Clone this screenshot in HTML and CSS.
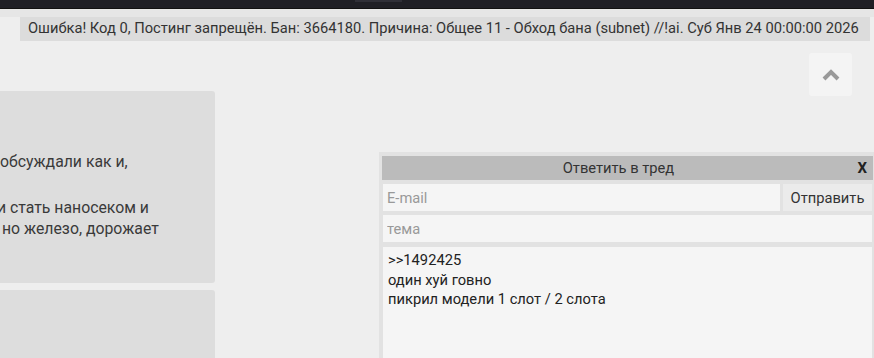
FILE: index.html
```html
<!DOCTYPE html>
<html lang="ru">
<head>
  <meta charset="UTF-8">
  <meta name="viewport" content="width=device-width, initial-scale=1.0">
  <title>Тред</title>
  <link rel="stylesheet" href="styles.css">
</head>
<body>
  <div class="topbar">
    <div class="topbar-tab"></div>
  </div>
  <div class="subbar"></div>

  <div class="notice-row">
    <div class="notice">Ошибка! Код 0, Постинг запрещён. Бан: 3664180. Причина: Общее 11 - Обход бана (subnet) //!ai. Суб Янв 24 00:00:00 2026</div>
  </div>

  <div class="thread">
    <div class="post">
      <div class="post-text">
        <div class="line">обсуждали как и,</div>
        <div class="line gap">&nbsp;</div>
        <div class="line cut">и стать наносеком и</div>
        <div class="line shift">но железо, дорожает</div>
      </div>
    </div>
    <div class="post"></div>
  </div>

  <!-- scroll to top -->
  <div class="up-btn">
    <svg width="18" height="12" viewBox="0 0 18 12">
      <path d="M2 10 L9 3 L16 10" fill="none" stroke="#999" stroke-width="4" stroke-linejoin="miter"/>
    </svg>
  </div>

  <!-- quick reply -->
  <div class="reply-form">
    <div class="reply-head">
      <div class="reply-title">Ответить в тред</div>
      <div class="reply-close">X</div>
    </div>
    <div class="reply-row">
      <input class="field email" type="text" placeholder="E-mail">
      <button class="send">Отправить</button>
    </div>
    <div class="reply-row">
      <input class="field" type="text" placeholder="тема">
    </div>
    <textarea class="reply-text">&gt;&gt;1492425
один хуй говно
пикрил модели 1 слот / 2 слота</textarea>
  </div>
</body>
</html>
```

FILE: styles.css
```css
body {
  margin: 0;
  padding: 0;
  font-family: Roboto, "Liberation Sans", sans-serif;
  background-color: #eeeeee;
  color: #333;
  overflow: hidden;
  height: 358px;
}

.topbar {
  height: 8px;
  background-color: #1f1f25;
  border-bottom: 1px solid #111;
}

.topbar-tab {
  margin-left: 355px;
  width: 47px;
  height: 2px;
  background-color: #2f2f37;
}

.subbar {
  height: 8px;
  background-color: #e6e6e6;
}

.notice-row {
  padding-left: 20px;
}

.notice {
  width: 850px;
  height: 24px;
  line-height: 22px;
  box-sizing: border-box;
  padding-left: 8px;
  background-color: #dcdcdc;
  font-size: 14.7px;
  color: #333;
  white-space: nowrap;
  overflow: hidden;
}

.thread {
  padding-top: 50px;
  margin-left: -10px;
}

.post {
  width: 225px;
  height: 192px;
  background-color: #dddddd;
  border-radius: 3px;
  margin-bottom: 7px;
  box-sizing: border-box;
  padding: 60px 0 0 10px;
}

.post-text {
  font-size: 15.8px;
  line-height: 21px;
  color: #3a3a3a;
}

.line {
  white-space: nowrap;
}

.gap {
  height: 25px;
}

.cut {
  margin-left: -3px;
}

.shift {
  margin-left: 2px;
}

.up-btn {
  position: absolute;
  left: 809px;
  top: 53px;
  width: 43px;
  height: 43px;
  background-color: #f4f4f4;
  border-radius: 3px;
  display: flex;
  justify-content: center;
  align-items: center;
}

.reply-form {
  position: absolute;
  left: 379px;
  top: 152px;
  width: 497px;
  height: 220px;
  box-sizing: border-box;
  padding: 4px 3px 0 3px;
  background-color: #e2e2e2;
  display: flex;
  flex-direction: column;
  gap: 4px;
}

.reply-head {
  display: flex;
  align-items: center;
  height: 24px;
  background-color: #bbbbbb;
  font-size: 14.7px;
  color: #333;
}

.reply-title {
  flex: 1;
  text-align: center;
}

.reply-close {
  width: 18px;
  box-sizing: border-box;
  padding-right: 6px;
  text-align: right;
  font-weight: bold;
  font-size: 15px;
  color: #222;
}

.reply-row {
  display: flex;
  gap: 3px;
  height: 27px;
  margin: 0 1px;
}

.field {
  flex: 1;
  border: none;
  outline: none;
  margin: 0;
  padding: 0 4px;
  background-color: #f5f5f5;
  font-family: Roboto, "Liberation Sans", sans-serif;
  font-size: 14.7px;
  color: #333;
}

.field::placeholder {
  color: #999;
}

.send {
  width: 89px;
  border: none;
  margin: 0;
  padding: 0;
  background-color: #ebebeb;
  font-family: Roboto, "Liberation Sans", sans-serif;
  font-size: 14.7px;
  color: #333;
}

.reply-text {
  flex: 1;
  margin: 1px 1px 0 1px;
  border: none;
  outline: none;
  resize: none;
  padding: 4px 5px;
  background-color: #f5f5f5;
  font-family: Roboto, "Liberation Sans", sans-serif;
  font-size: 14.7px;
  line-height: 19.5px;
  color: #222;
}
```
